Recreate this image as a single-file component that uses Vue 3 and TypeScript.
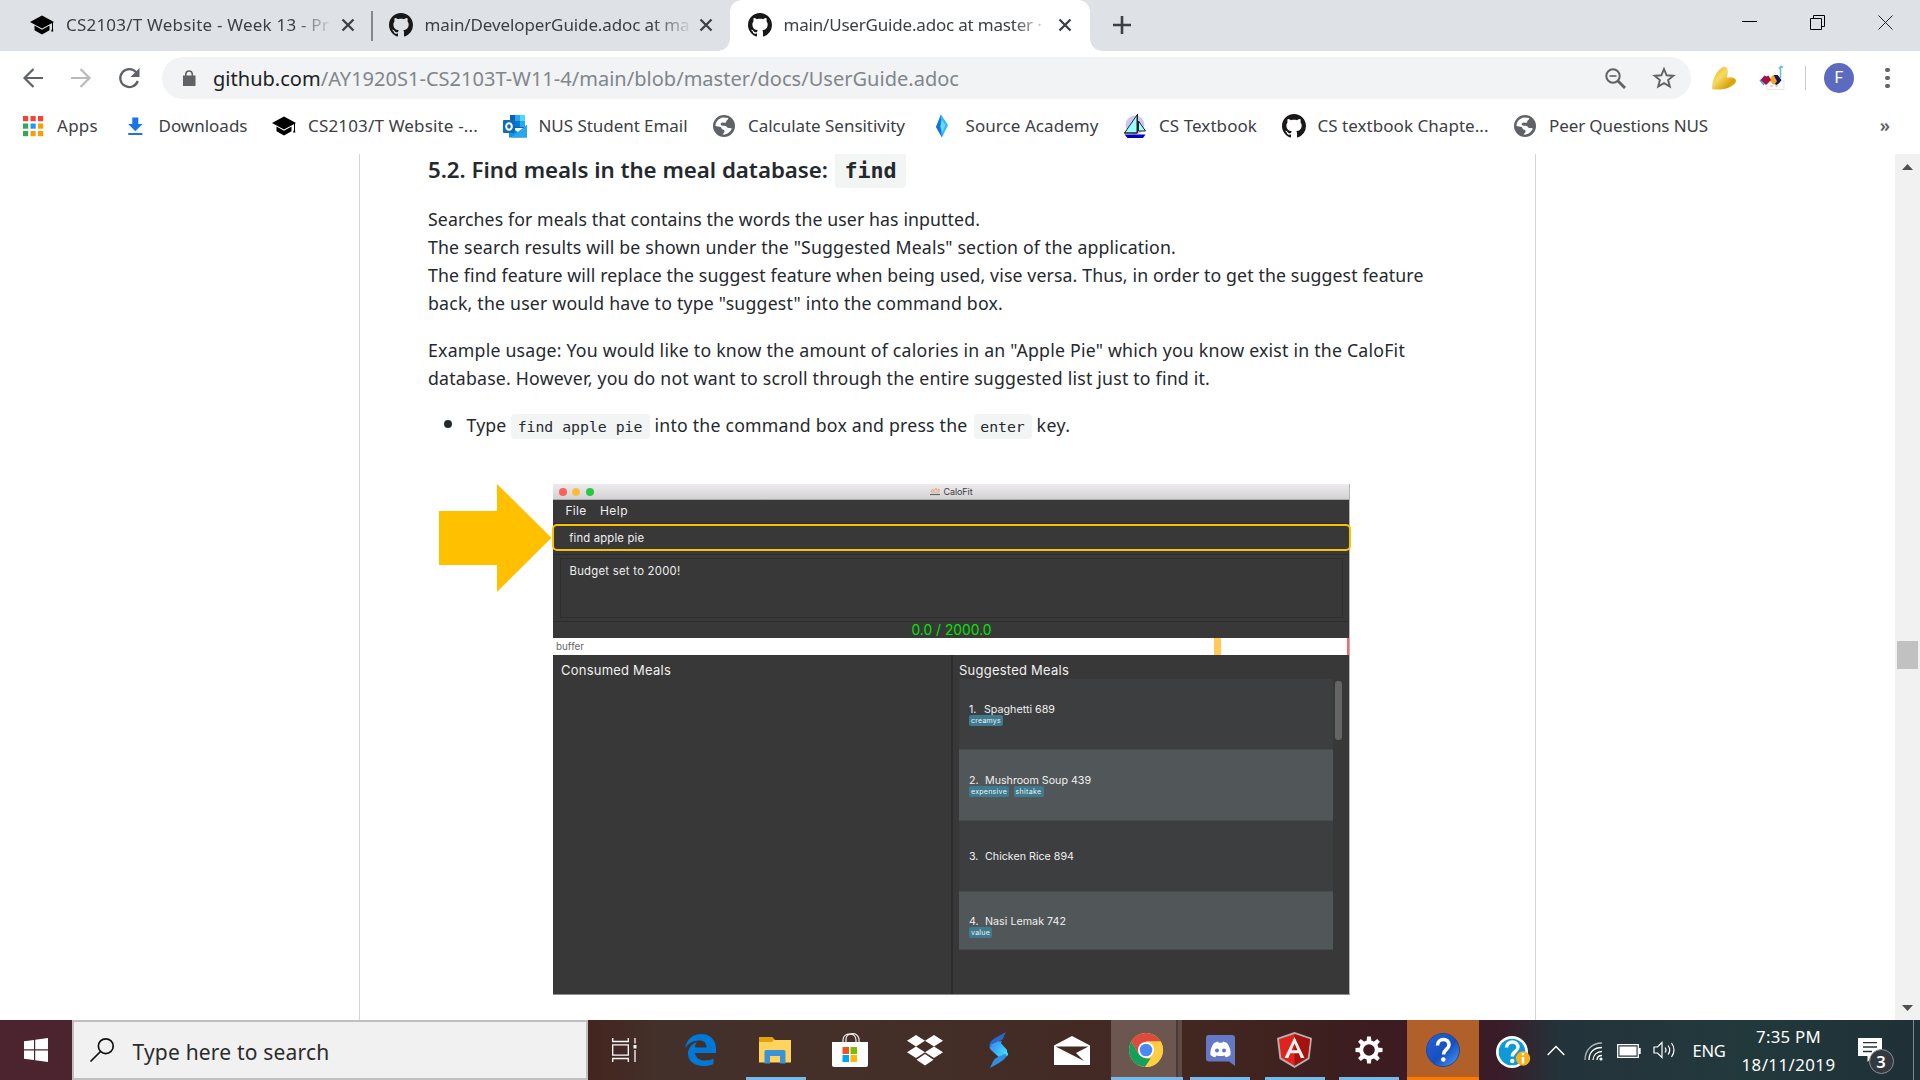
<script setup lang="ts">
import type { Directive } from 'vue'

interface Tab { title: string; width: number; icon: 'cap' | 'github'; active?: boolean }
interface Bookmark { icon: string; label: string; width: number }
interface Meal { index: number; name: string; width: number; height: number; tags: { label: string; width: number }[] }

// Spreads a run of text over the given width by adjusting its tracking.
const vFit: Directive<HTMLElement, number> = {
  mounted(el, { value }) {
    const count = (el.textContent ?? '').length
    const natural = el.getBoundingClientRect().width
    el.style.letterSpacing = `${((value - natural) / count).toFixed(4)}px`
  },
}

const tabs: Tab[] = [
  { title: 'CS2103/T Website - Week 13 - Pr', width: 263, icon: 'cap' },
  { title: 'main/DeveloperGuide.adoc at ma', width: 265, icon: 'github' },
  { title: 'main/UserGuide.adoc at master ·', width: 258, icon: 'github', active: true },
]

const bookmarks: Bookmark[] = [
  { icon: 'apps', label: 'Apps', width: 41 },
  { icon: 'download', label: 'Downloads', width: 89 },
  { icon: 'cap', label: 'CS2103/T Website -...', width: 170 },
  { icon: 'outlook', label: 'NUS Student Email', width: 149 },
  { icon: 'globe', label: 'Calculate Sensitivity', width: 157 },
  { icon: 'diamond', label: 'Source Academy', width: 133 },
  { icon: 'boat', label: 'CS Textbook', width: 98 },
  { icon: 'github', label: 'CS textbook Chapte...', width: 171 },
  { icon: 'globe', label: 'Peer Questions NUS', width: 159 },
]

const meals: Meal[] = [
  { index: 1, name: 'Spaghetti 689', width: 71, height: 71, tags: [{ label: 'creamys', width: 30 }] },
  { index: 2, name: 'Mushroom Soup 439', width: 106, height: 71, tags: [{ label: 'expensive', width: 36 }, { label: 'shitake', width: 26 }] },
  { index: 3, name: 'Chicken Rice 894', width: 89, height: 71, tags: [] },
  { index: 4, name: 'Nasi Lemak 742', width: 81, height: 58, tags: [{ label: 'value', width: 19 }] },
]

const githubPath = 'M8 0C3.58 0 0 3.58 0 8c0 3.54 2.29 6.53 5.47 7.59.4.07.55-.17.55-.38 0-.19-.01-.82-.01-1.49-2.01.37-2.53-.49-2.69-.94-.09-.23-.48-.94-.82-1.13-.28-.15-.68-.52-.01-.53.63-.01 1.08.58 1.23.82.72 1.21 1.87.87 2.33.66.07-.52.28-.87.51-1.07-1.78-.2-3.64-.89-3.64-3.95 0-.87.31-1.59.82-2.15-.08-.2-.36-1.02.08-2.12 0 0 .67-.21 2.2.82.64-.18 1.32-.27 2-.27s1.36.09 2 .27c1.53-1.04 2.2-.82 2.2-.82.44 1.1.16 1.92.08 2.12.51.56.82 1.27.82 2.15 0 3.07-1.87 3.75-3.65 3.95.29.25.54.73.54 1.48 0 1.07-.01 1.93-.01 2.2 0 .21.15.46.55.38A8.01 8.01 0 0 0 16 8c0-4.42-3.58-8-8-8z'
const gearTeeth = [0, 45, 90, 135, 180, 225, 270, 315]
const appColors = ['#f44336', '#f44336', '#f44336', '#34a853', '#2196f3', '#fb9e05', '#34a853', '#fb9e05', '#fb9e05']
</script>

<template>
  <div class="screen">
    <header class="tabstrip">
      <div v-for="(tab, i) in tabs" :key="i" class="tab" :class="{ active: tab.active, divided: i === 0 }">
        <svg v-if="tab.icon === 'cap'" class="fav" viewBox="0 0 24 24"><path d="M12 2.500 24 9 12 15.500 0 9zM4.500 12.500 12 16.800l7.500-4.300v4.800L12 21.500 4.500 17.300z" /><path d="M22 9.500v6.500l-1 2.500h2.300L23 16V9z" /></svg>
        <svg v-else class="fav" viewBox="0 0 16 16"><path fill="#191717" :d="githubPath" /></svg>
        <div class="tab-title"><span v-fit="tab.width">{{ tab.title }}</span></div>
        <svg class="tab-close" viewBox="0 0 14 14"><path d="M1.500 1.500l11 11M12.500 1.500l-11 11" stroke="#3c4043" stroke-width="2.300" /></svg>
      </div>
      <svg class="newtab" viewBox="0 0 18 18"><path d="M9 0v18M0 9h18" stroke="#3c4043" stroke-width="2.600" /></svg>
      <div class="win-controls">
        <svg viewBox="0 0 15 15"><path d="M0 6.500h15" stroke="#000" stroke-width="1" /></svg>
        <svg viewBox="0 0 15 15" fill="none" stroke="#000"><path d="M.5 3.500h11v11H.500zM3.500 3.500V.500h11v11h-3" /></svg>
        <svg viewBox="0 0 15 15"><path d="M.5.500l14 14M14.500.500l-14 14" stroke="#222" /></svg>
      </div>
    </header>

    <div class="toolbar">
      <svg class="nav back" viewBox="0 0 20 20" fill="none" stroke="#5f6368" stroke-width="2.200"><path d="M20 10H1.500M10.500 1 1.500 10l9 9" /></svg>
      <svg class="nav fwd" viewBox="0 0 20 20" fill="none" stroke="#bababa" stroke-width="2.200"><path d="M0 10h18.500M9.500 1l9 9-9 9" /></svg>
      <svg class="nav reload" viewBox="0 0 22 22"><path d="M18.300 5.400A9 9 0 1 0 19.800 14" fill="none" stroke="#5f6368" stroke-width="2.300" /><path d="M21.500 1v9h-9z" fill="#5f6368" /></svg>
      <div class="omnibox">
        <svg class="lock" viewBox="0 0 12 16"><path d="M0 5.500h12.500V16H0z" fill="#5f6368" /><path d="M2.800 6V3.800a3.300 3.300 0 0 1 6.500 0V6" fill="none" stroke="#5f6368" stroke-width="1.600" /></svg>
        <span v-fit="746" class="url"><b>github.com</b>/AY1920S1-CS2103T-W11-4/main/blob/master/docs/UserGuide.adoc</span>
        <svg class="mag" viewBox="0 0 21 21" fill="none" stroke="#5f6368" stroke-width="2"><circle cx="8" cy="8" r="6.700" /><path d="M13 13l7 7" stroke-width="2.800" /><path d="M4.500 8h7" stroke-width="1.600" /></svg>
        <svg class="star" viewBox="0 0 22 22"><path d="M11 2l2.600 6.300 6.700.5-5.200 4.300 1.700 6.500L11 16.100l-5.800 3.500 1.700-6.500L1.700 8.800l6.700-.5z" fill="none" stroke="#5f6368" stroke-width="1.900" /></svg>
      </div>
      <svg class="ext" viewBox="0 0 24 24">
        <defs><linearGradient id="gold" x1="0" y1="0" x2="1" y2="1"><stop offset="0" stop-color="#e8b921" /><stop offset=".4" stop-color="#f6da62" /><stop offset=".75" stop-color="#d9a308" /><stop offset="1" stop-color="#f3c62c" /></linearGradient></defs>
        <path d="M.3 23C-.5 14 6 2 12 .800c4-.6 5 5 2.500 11 5-1.500 9 0 9.500 3 .3 3-5 6.500-10 7.700-4 1-9 1.500-13.700.5z" fill="url(#gold)" />
      </svg>
      <svg class="ext second" viewBox="0 0 24 24">
        <path d="M7 15h17v8.500H7z" fill="#fafafa" stroke="#ddd" stroke-width=".6" /><path d="M0 14l4 5" stroke="#3fa9e0" stroke-width="1.500" /><path d="M20.500 1v11M19 2.500l2-2 2 1" fill="none" stroke="#69bce8" stroke-width="1.600" />
        <path d="M17.500 9l3.500 5-4 5-5-2z" fill="#1d1757" /><path d="M13 9l5 5-4 5-5-5z" fill="#f5a623" /><path d="M13.500 9h4l4 5-3 4z" fill="#1d1757" /><path d="M4.500 9.500l2 1 2-1 2.500 4.500-5 5-5.500-5z" fill="#a41244" /><path d="M10.500 20h2M15.500 20h2" stroke="#777" stroke-width=".7" />
      </svg>
      <i class="bar-divider"></i>
      <div class="avatar">F</div>
      <div class="dots"><i></i><i></i><i></i></div>
    </div>

    <nav class="bookmarks">
      <div v-for="(b, i) in bookmarks" :key="i" class="bookmark">
        <svg v-if="b.icon === 'apps'" viewBox="0 0 24 24"><rect v-for="(c, k) in appColors" :key="k" :x="2 + (k % 3) * 7.500" :y="2 + Math.floor(k / 3) * 7.500" width="5.200" height="5.200" :fill="c" /></svg>
        <svg v-else-if="b.icon === 'download'" viewBox="0 0 24 24" fill="#1a73e8"><path d="M9.300 3.500h6V10h4.200L12.300 17.200 5.200 10h4.100zM5.200 19h14.200v2H5.200z" /></svg>
        <svg v-else-if="b.icon === 'cap'" viewBox="0 0 24 24"><path d="M12 2.500 24 9 12 15.500 0 9zM4.500 12.500 12 16.800l7.500-4.300v4.800L12 21.500 4.500 17.300z" /><path d="M22 9.500v6.500l-1 2.500h2.300L23 16V9z" /></svg>
        <svg v-else-if="b.icon === 'outlook'" viewBox="0 0 24 24">
          <path d="M7 1h15v13H7z" fill="#0a62b5" /><path d="M12 1h5v6h-5zM17 7h5v6h-5z" fill="#28a8ea" /><path d="M17 1h5v6h-5z" fill="#50d9ff" /><path d="M12 7h5v6h-5z" fill="#0078d4" /><path d="M6 12l9 6 9-7v12.500H6z" fill="#1490df" /><path d="M24 23.500V11L8 23.500z" fill="#28a8ea" /><rect y="6" width="12" height="13" rx="1" fill="#0f6cbd" /><ellipse cx="6" cy="12.500" rx="2.800" ry="3.300" fill="none" stroke="#fff" stroke-width="2" />
        </svg>
        <svg v-else-if="b.icon === 'globe'" viewBox="0 0 24 24"><circle cx="12" cy="12" r="11" fill="#5f6368" /><path d="M11 3.500c-4 .5-7.500 4-7.500 8.500l5 1c1.500.5.5 2 2 2.500 1.500.3 2 .5 2 2.500l-2 2.500c4.500.5 8-2.500 9.300-6-2-1-4.300 0-5-1.500-.8-2-3-1-5-1.500-2-.8-1-3 1-3 1.500 0 2 .8 3 0s0-2 1.500-2.500c1-.5.700-1.500 1-2z" fill="#fff" /></svg>
        <svg v-else-if="b.icon === 'diamond'" viewBox="0 0 24 24"><path d="M11 .500 18 11l-6 12.500L6 13z" fill="#35b7fb" /><path d="M11 .5l-5 12.500 6 10.500-1.500-10z" fill="#1971d2" /><path d="M12 6l3.500 5-3 7-2-5.500z" fill="#60dcff" /></svg>
        <svg v-else-if="b.icon === 'boat'" viewBox="0 0 24 24"><circle cx="12" cy="11" r="9.500" fill="#cbc5fa" /><path d="M14 1 1.500 19H14zM15.500 7v10h7z" fill="#9ff" stroke="#222" stroke-width="1" /><path d="M1 19h13.500V0" fill="none" stroke="#222" /><path d="M1.500 20.500h21L20 24H4.500z" fill="#0000c8" /></svg>
        <svg v-else viewBox="0 0 16 16"><path fill="#191717" :d="githubPath" /></svg>
        <span v-fit="b.width">{{ b.label }}</span>
      </div>
      <span class="more">»</span>
    </nav>

    <main class="viewport">
      <article class="page">
        <h3><span v-fit="400">5.2. Find meals in the meal database:</span><code>find</code></h3>
        <p>
          <span class="line"><span v-fit="552">Searches for meals that contains the words the user has inputted.</span></span>
          <span class="line"><span v-fit="748">The search results will be shown under the "Suggested Meals" section of the application.</span></span>
          <span class="line"><span v-fit="995.5">The find feature will replace the suggest feature when being used, vise versa. Thus, in order to get the suggest feature</span></span>
          <span class="line"><span v-fit="575">back, the user would have to type "suggest" into the command box.</span></span>
        </p>
        <p>
          <span class="line"><span v-fit="977">Example usage: You would like to know the amount of calories in an "Apple Pie" which you know exist in the CaloFit</span></span>
          <span class="line"><span v-fit="782">database. However, you do not want to scroll through the entire suggested list just to find it.</span></span>
        </p>
        <div class="step">
          <i class="bullet"></i><span v-fit="40">Type</span><code class="long">find apple pie</code><span v-fit="313">into the command box and press the</span><code class="short">enter</code><span v-fit="34">key.</span>
        </div>

        <figure>
          <svg class="arrow" viewBox="0 0 114 108"><path d="M0 27h58V0l54.500 53.800L58 108V81H0z" fill="#ffc000" /></svg>
          <section class="app">
            <div class="app-title">
              <i class="red"></i><i class="amber"></i><i class="green"></i>
              <div class="app-name"><svg viewBox="0 0 10 9"><path d="M1 5l1.500-3 1.500 2L6 1l1 2.500L9 2v3z" fill="none" stroke="#f0a070" stroke-width=".9" /><path d="M0 7.500h10" stroke="#666" stroke-width="1.200" /></svg><span v-fit="29">CaloFit</span></div>
            </div>
            <div class="menu"><span v-fit="21">File</span><span v-fit="28">Help</span></div>
            <div class="command"><span v-fit="75">find apple pie</span></div>
            <div class="result"><div class="result-box"><span v-fit="111">Budget set to 2000!</span></div></div>
            <div class="budget"><span v-fit="80">0.0 / 2000.0</span></div>
            <div class="buffer"><span v-fit="28">buffer</span><i class="mark"></i><i class="end"></i></div>
            <div class="panels">
              <div class="consumed"><span v-fit="110">Consumed Meals</span></div>
              <div class="suggested">
                <span v-fit="110" class="head">Suggested Meals</span>
                <div class="list-wrap">
                  <div class="list">
                    <div v-for="m in meals" :key="m.index" class="meal" :style="{ height: m.height + 'px' }" :class="{ short: m.height < 60 }">
                      <div class="meal-name"><span class="num">{{ m.index }}.</span><span v-fit="m.width">{{ m.name }}</span></div>
                      <div v-if="m.tags.length" class="tags"><span v-for="t in m.tags" :key="t.label" class="tag"><span v-fit="t.width">{{ t.label }}</span></span></div>
                    </div>
                  </div>
                  <i class="thumb"></i>
                </div>
              </div>
            </div>
          </section>
        </figure>
      </article>
      <aside class="scrollbar">
        <svg viewBox="0 0 11 6"><path d="M0 6 5.500 0 11 6z" fill="#505050" /></svg>
        <i></i>
        <svg viewBox="0 0 11 6"><path d="M0 0l5.500 6L11 0z" fill="#505050" /></svg>
      </aside>
    </main>

    <footer class="taskbar">
      <div class="start"><svg viewBox="0 0 24 24" fill="#fff"><path d="M0 3.300 10 2v9.300H0zM11.200 1.800 24 0v11.300H11.200zM0 12.500h10V22L0 20.700zM11.200 12.500H24V24l-12.800-1.800z" /></svg></div>
      <div class="search">
        <svg viewBox="0 0 24 24" fill="none" stroke="#111" stroke-width="1.700"><circle cx="15.800" cy="8.200" r="7.400" /><path d="M10.500 13.500.500 23.500" /></svg>
        <span v-fit="197">Type here to search</span>
      </div>
      <div class="slots">
        <div class="slot taskview"><svg width="25" height="24" viewBox="0 0 25 24" fill="none" stroke="#fff" stroke-width="1.300"><path d="M.7 0v3.500h15.600V0M.700 24v-3.500h15.600V24M.700 6.800h15.600v10.400H.700zM23 0v5.500M23 12v12" /><path d="M23 7v3.500" stroke-width="3" /></svg></div>
        <div class="slot"><svg width="32" height="32" viewBox="0 0 32 32"><path fill="#0078d7" d="M1 14C3 5 9 0 17 0c9 0 15 6 15 14v5H11c.5 5 5 7.500 10 7.500 4 0 6.500-1 8.500-2v5.500c-3 1.500-6 2-10 2C10 32 4 27 4 19.500 4 14 8 10 13 8c-1.500 2-2 3.500-2 5.500h11.500C22.500 9 20 6.500 15 6.500 9 6.500 4 9.500 1 14z" /></svg></div>
        <div class="slot open explorer"><svg width="32" height="27" viewBox="0 0 32 27"><path d="M0 0h13l3 3h16v22.500H0z" fill="#ffd35c" /><path d="M0 0h13l2 2.500-2 2.500H0z" fill="#e0a30e" /><path d="M5.500 26.500V14.500q0-1.500 1.500-1.500h18q1.500 0 1.500 1.500v12H21V19H11v7.500z" fill="#3a93d8" /></svg></div>
        <div class="slot wide"><svg width="36" height="34" viewBox="0 0 36 34"><path d="M11 10V7c0-8 13-8 13 0v3M14 10V6c0-6 11-8 13 0v4" fill="none" stroke="#e4e4e4" stroke-width="1.300" /><path d="M0 9h36v23q0 2-2 2H2q-2 0-2-2z" fill="#fff" /><path d="M10.500 14H17v7h-6.500z" fill="#f25022" /><path d="M18.500 14H25v7h-6.500z" fill="#7fba00" /><path d="M10.500 22H17v7h-6.500z" fill="#00a4ef" /><path d="M18.500 22H25v7h-6.500z" fill="#ffb900" /></svg></div>
        <div class="slot wide"><svg width="36" height="31" viewBox="0 0 36 31" fill="#fff"><path d="M9 0l9 5.700-9 5.800-9-5.800zM27 0l9 5.700-9 5.800-9-5.800zM9 11.500l9 5.800L9 23l-9-5.700zM27 11.500l9 5.800-9 5.700-9-5.700zM18 19l8.500 5.800L18 30.500l-8.500-5.700z" /></svg></div>
        <div class="slot wide"><svg width="20" height="36" viewBox="0 0 20 36"><defs><linearGradient id="sw" x1="0" y1="0" x2="1" y2="1"><stop offset="0" stop-color="#3f7ff0" /><stop offset="1" stop-color="#3be8ff" /></linearGradient></defs><path d="M13 9 1 13c-1 2 0 4 1 5l10 9 6-3c2-1 1-3 0-4l-7-7z" fill="url(#sw)" /><path d="M17 0 6 6C1 9 0 12 1 15l10-6 2-1c2-2 2-5 4-8z" fill="#2b67c9" /><path d="M1 36l9-5c5-3 8-6 8-10L7 26c-3 2-4 6-6 10z" fill="#2f8fe0" /><path d="M1 13l9-4 8 9v5z" fill="url(#sw)" /></svg></div>
        <div class="slot"><svg width="36" height="29" viewBox="0 0 36 29"><path d="M0 9.500 18 0l18 9.500V29H0z" fill="#fff" /><path d="M1.500 10.500h33L22 17l8 8z" fill="#432c26" /></svg></div>
        <div class="slot open current"><svg width="34" height="34" viewBox="0 0 34 34"><circle cx="17" cy="17" r="17" fill="#ffcd40" /><path d="M2.300 8.500A17 17 0 0 1 31.700 8.500H17L9.600 21.200z" fill="#dd4b3e" /><path d="M2.300 8.500 9.600 21.200 17 25.500h5.500L16 34A17 17 0 0 1 2.300 8.500z" fill="#12a05c" /><path d="M31.700 8.500H17l7.400 12.700L16 34A17 17 0 0 0 31.700 8.500z" fill="#ffcd40" /><circle cx="17" cy="17" r="8" fill="#fff" /><circle cx="17" cy="17" r="6.300" fill="#4a89f4" /></svg></div>
        <div class="slot open"><svg width="29" height="31" viewBox="0 0 29 31"><path d="M3 0h23q3 0 3 3v28l-6-4.500H3q-3 0-3-3V3q0-3 3-3z" fill="#6478c6" /><path d="M8 8l4-1.500.7 1.200h3.600L17 6.500 21 8c3 4 4 8 3.500 12-1.500 1.300-3 2-4.800 2.300l-1-1.800c-3 .8-5.400.8-8.400 0l-1 1.800C7.500 22 6 21.300 4.500 20 4 16 5 12 8 8z" fill="#fff" /><circle cx="11" cy="15.500" r="2" fill="#6478c6" /><circle cx="18" cy="15.500" r="2" fill="#6478c6" /></svg></div>
        <div class="slot open"><svg width="35" height="36" viewBox="0 0 35 36"><path d="M17.500 0 35 6l-2.500 21-15 9-15-9L0 6z" fill="#b3b3b3" /><path d="M17.500 2 33 7.200l-2.300 18.600-13.200 8-13.200-8L2 7.200z" fill="#e0231f" /><path d="M17.500 2 33 7.200l-2.300 18.600-13.200 8z" fill="#a6120d" /><path d="M17.500 5 7.500 26h3.800l2-4.800h8.500l2 4.800h3.700zm0 6.500 3 6.700h-6z" fill="#f2f2f2" fill-rule="evenodd" /></svg></div>
        <div class="slot open"><svg width="28" height="28" viewBox="-14 -14 28 28"><circle r="7.800" fill="none" stroke="#fff" stroke-width="4" /><path v-for="a in gearTeeth" :key="a" d="M-2.500-8-1.900-13.500h3.800L2.500-8z" fill="#fff" :transform="`rotate(${a})`" /></svg></div>
        <div class="slot alert"><svg width="34" height="34" viewBox="0 0 34 34"><defs><linearGradient id="q" x1="0" y1="0" x2="1" y2="1"><stop offset="0" stop-color="#2563d9" /><stop offset=".55" stop-color="#174fbd" /><stop offset="1" stop-color="#4ba2ff" /></linearGradient></defs><circle cx="17" cy="17" r="16.500" fill="url(#q)" stroke="#244a8e" /><path d="M11.500 12.500c0-8 12-8 11.500-.5-.2 4.500-5.500 4.500-5.500 9.500" fill="none" stroke="#fff" stroke-width="3.600" /><circle cx="17.300" cy="26.500" r="2.300" fill="#fff" /></svg></div>
      </div>
      <div class="tray">
        <svg class="t-help" width="34" height="32" viewBox="0 0 34 32"><circle cx="16" cy="16" r="16" fill="#fff" /><circle cx="16" cy="16" r="13.300" fill="#0e9ad9" /><path d="M10.500 11.500c0-7.500 12-7 11.500 0-.3 4-5.700 4-5.700 9" fill="none" stroke="#fff" stroke-width="3.400" /><circle cx="16.300" cy="25" r="2.200" fill="#fff" /><circle cx="27" cy="22.500" r="7.200" fill="#f6b11f" /><path d="M27 21v6.500M27 17v2.300" stroke="#fff" stroke-width="2.400" /></svg>
        <svg class="t-chev" width="18" height="11" viewBox="0 0 18 11"><path d="M.7 10 9 1.500 17.300 10" fill="none" stroke="#fff" stroke-width="1.500" /></svg>
        <svg class="t-wifi" width="19" height="19" viewBox="0 0 19 19" fill="none" stroke="#fff" stroke-width="1.300"><path d="M1 18C1 8 8 1 18 1" opacity=".65" /><path d="M5 18C5 10 10 5.500 18 5.500M9 18c0-5 4-8.500 9-8.500M13 18c0-3 2-4.500 5-4.500" /><circle cx="17" cy="17" r="1.600" fill="#fff" stroke="none" /></svg>
        <svg class="t-bat" width="24" height="14" viewBox="0 0 24 14"><path d="M.7.700h20.600v12.600H.700z" fill="none" stroke="#fff" stroke-width="1.300" /><path d="M2.500 2.500h17v9h-17zM22 4h1.700v6H22z" fill="#fff" /></svg>
        <svg class="t-vol" width="24" height="18" viewBox="0 0 24 18" fill="none" stroke="#fff" stroke-width="1.200"><path d="M1 6h3.500L9 1.500v15L4.500 12H1z" /><path d="M12 6.500q2 2.500 0 5M15 4.500q3.500 4.500 0 9M18.500 2q5 7 0 14" /></svg>
        <span v-fit="33" class="t-lang">ENG</span>
        <div class="clock"><span v-fit="65">7:35 PM</span><span v-fit="94">18/11/2019</span></div>
        <div class="notif">
          <svg width="24" height="25" viewBox="0 0 24 25"><path d="M0 0h24v18h-9l-5.500 6v-6H0z" fill="#fff" /><path d="M5 4.700h14M5 9h14M5 13.500h9" stroke="#22343a" stroke-width="1.300" /></svg>
          <b>3</b>
        </div>
        <i class="peek"></i>
      </div>
    </footer>
  </div>
</template>

<style>
html, body { margin: 0; overflow: hidden; background: #fff; }
</style>

<style scoped>
.screen { width: 1920px; height: 1080px; display: flex; flex-direction: column; overflow: hidden; background: #fff; font-family: "Noto Sans", "Open Sans", sans-serif; color: #3c4043; white-space: nowrap; }
.screen * { box-sizing: border-box; }
svg { display: block; flex: none; overflow: visible; }
i { display: block; flex: none; }

.tabstrip { height: 51px; flex: none; display: flex; align-items: center; background: #dee1e6; }
.tab { height: 51px; width: 359px; display: flex; align-items: center; padding-left: 18px; position: relative; padding-bottom: 1px; }
.tab:first-child { width: 370.500px; padding-left: 30px; }
.tab.active { background: #fff; border-radius: 12px 12px 0 0; width: 360px; }
.tab.active::before, .tab.active::after { content: ""; position: absolute; bottom: 0; width: 12px; height: 12px; }
.tab.active::before { left: -12px; background: radial-gradient(circle at 0 0, transparent 11.5px, #fff 12px); }
.tab.active::after { right: -12px; background: radial-gradient(circle at 100% 0, transparent 11.5px, #fff 12px); }
.tab.divided::after { content: ""; position: absolute; right: -2px; top: 11px; width: 1.5px; height: 30px; background: #85888c; }
.fav { width: 24px; height: 24px; }
.tab-title { margin-left: 12px; width: 264px; overflow: hidden; font-size: 17px; line-height: 28px; mask-image: linear-gradient(90deg, #000 228px, transparent 268px); }
.tab-title span, .bookmark span, .line > span, .step > span, h3 > span, .url { display: inline-block; }
.tab-close { width: 14px; height: 14px; margin-left: 10.500px; }
.newtab { width: 18px; height: 18px; margin: 0 0 1px 23.500px; }
.win-controls { display: flex; gap: 53px; margin-left: auto; margin-right: 27px; padding-bottom: 7px; }
.win-controls svg { width: 15px; height: 15px; }

.toolbar { height: 54px; flex: none; display: flex; align-items: center; }
.nav { height: 20px; width: 20px; margin-left: 23px; }
.fwd { margin-left: 28px; }
.reload { margin-left: 27px; width: 22px; height: 22px; }
.omnibox { margin-left: 22px; width: 1529px; height: 42px; border-radius: 21px; background: #f1f3f4; display: flex; align-items: center; }
.lock { width: 12px; height: 16px; margin-left: 21px; }
.url { margin-left: 18px; font-size: 20px; line-height: 43px; color: #80868b; }
.url b { font-weight: 400; color: #202124; }
.mag { width: 21px; height: 21px; margin-left: auto; }
.star { width: 22px; height: 22px; margin: 0 16px 0 27px; }
.ext { width: 24px; height: 24px; margin-left: 21px; }
.ext.second { margin-left: 24px; }
.bar-divider { width: 1px; height: 24px; background: #c9cbce; margin-left: 21px; }
.avatar { width: 30px; height: 30px; border-radius: 50%; background: #5c6bc0; color: #fff; font: 16px/30px Roboto, sans-serif; text-align: center; margin-left: 18px; }
.dots { display: flex; flex-direction: column; gap: 3.500px; margin-left: 31px; }
.dots i { width: 4.500px; height: 4.500px; border-radius: 50%; background: #5f6368; }

.bookmarks { height: 49px; flex: none; display: flex; align-items: center; gap: 24.500px; padding: 0 0 7px 21px; }
.bookmark { display: flex; align-items: center; gap: 12px; font-size: 17px; line-height: 30px; }
.bookmark svg { width: 24px; height: 24px; }
.more { margin-left: auto; margin-right: 30px; font-size: 18px; font-weight: 600; line-height: 20px; color: #5f6368; padding-bottom: 3px; }

.viewport { height: 866px; flex: none; display: flex; overflow: hidden; }
.page { width: 1177px; margin-left: 359px; border: solid #d1d5da; border-width: 0 1px; padding-left: 68px; color: #24292e; }
h3 { margin: 0; height: 34px; display: flex; font-size: 22.300px; font-weight: 600; line-height: 31px; }
h3 code { margin-left: 7px; width: 71px; height: 34px; border-radius: 0 0 4px 4px; background: #f3f4f4; font: bold 21.700px/33px "DejaVu Sans Mono", monospace; text-align: center; }
p { margin: 17px 0 19px; font-size: 17.700px; }
p + p { margin-top: 0; }
.line { display: block; height: 28px; line-height: 28px; }
.step { display: flex; align-items: center; font-size: 17.700px; line-height: 28px; height: 28px; }
.bullet { width: 8px; height: 8px; border-radius: 50%; background: #24292e; margin: 0 15px 2px 15.500px; }
.step code { height: 25px; border-radius: 4px; background: #f3f4f4; font: 14.800px/26px "DejaVu Sans Mono", monospace; text-align: center; margin: 2px 5px 0 4px; }
.step code.long { width: 139px; }
.step code.short { width: 58px; margin-left: 6px; }

figure { margin: 44px 0 0 11px; display: flex; }
.arrow { width: 114px; height: 108px; margin-top: 1px; }
.app { width: 797px; height: 511px; margin-top: 1px; background: #383838; border-right: 1px solid #b5b5b5; border-bottom: 1px solid #8e8e8e; font-family: Inter, sans-serif; color: #f0f0f0; display: flex; flex-direction: column; }
.app span { display: inline-block; }
.app-title { height: 16px; flex: none; display: flex; align-items: center; gap: 5.500px; padding-left: 5.500px; background: linear-gradient(#edebed, #d3d1d3); border-bottom: 1px solid #aaa; color: #3b3b3b; font-size: 9px; }
.app-title > i { width: 8px; height: 8px; border-radius: 50%; }
.red { background: #fc605b; }
.amber { background: #fdbc40; }
.green { background: #28c940; }
.app-name { display: flex; align-items: center; gap: 3.500px; margin-left: 331px; line-height: 15px; }
.app-name svg { width: 10px; height: 9px; }
.menu { height: 24px; flex: none; display: flex; gap: 13.500px; padding: 1px 0 0 12.500px; font-size: 12px; line-height: 20px; border-bottom: 1px solid #2b2b2b; }
.command { width: 799px; height: 27px; flex: none; margin-left: -1.500px; border: 2.400px solid #ffc000; border-radius: 5px; padding-left: 15.700px; font-size: 11.300px; line-height: 24.500px; z-index: 1; }
.result { height: 68px; flex: none; margin-top: 3px; border: solid #2d2d2d; border-width: 1px 0; padding: 3px 6px 0 7px; }
.result-box { height: 60px; border: 1px solid #2e2e2e; padding-left: 8.500px; font-size: 11.300px; line-height: 24px; }
.budget { height: 16px; flex: none; text-align: center; color: #00e400; font-size: 13.800px; line-height: 17.500px; padding-left: 1px; }
.buffer { height: 17px; flex: none; background: #fff; color: #666; font-size: 9.800px; line-height: 17px; display: flex; padding-left: 3px; }
.mark { width: 7px; height: 17px; background: #ffc95c; margin-left: 630px; }
.end { width: 2px; height: 17px; background: #ff6468; margin-left: auto; }
.panels { flex: 1; display: flex; font-size: 13px; line-height: 18px; }
.consumed { width: 400px; border-right: 2px solid #2c2c2c; padding: 6px 0 0 8px; }
.suggested { flex: 1; padding: 6px 0 0 6px; }
.head { height: 18px; vertical-align: top; }
.list-wrap { display: flex; gap: 2px; }
.list { width: 374px; }
.thumb { width: 7px; height: 59px; border-radius: 3px; background: #656565; margin-top: 2px; }
.meal { background: #3c3e3f; border-bottom: 1px solid #484b4c; display: flex; flex-direction: column; justify-content: center; padding: 0 0 1px 10px; font-size: 10.700px; line-height: 15px; }
.meal:nth-child(even) { background: #515658; }
.meal.short { padding-top: 12px; }
.meal-name { display: flex; height: 13px; }
.num { width: 16px; }
.meal:first-child .num { width: 15px; }
.tags { display: flex; gap: 4.500px; }
.tag { height: 11px; border-radius: 2px; background: #3e7b91; padding: 0 2px; font-size: 7px; line-height: 11px; }
.tag span { display: block; width: max-content; }

.scrollbar { width: 25px; margin-left: auto; background: #f1f1f1; display: flex; flex-direction: column; align-items: center; padding: 10px 0 9px; }
.scrollbar svg { width: 11px; height: 6px; }
.scrollbar i { width: 21px; height: 28px; background: #c1c1c1; margin: 471px 0 auto; }

.taskbar { height: 60px; flex: none; display: flex; background: linear-gradient(90deg, #4b2430 0, #4b2430 72px, #44251f 590px, #44302a 660px, #443029 850px, #432a25 1080px, #42261f 1220px, #3c1c20 1370px, #3a1c28 1500px, #24333b 1560px, #22393c 1750px, #1f3036 1920px); color: #fff; }
.start { width: 72px; display: flex; align-items: center; justify-content: center; }
.start svg { width: 24px; height: 24px; }
.search { width: 516px; border: 2px solid #c0c0c0; background: #f1f1f1; display: flex; align-items: center; padding-left: 16px; gap: 18.500px; color: #2b2b2b; font-size: 21px; line-height: 30px; }
.search svg { width: 24px; height: 24px; }
.search span, .tray span { display: inline-block; }
.search span { margin-top: 3px; }
.slots { display: flex; width: 893px; }
.slot { width: 74.400px; height: 60px; display: flex; align-items: center; justify-content: center; position: relative; }
.slot.taskview { padding-right: 2px; }
.slot.explorer { padding-left: 3px; }
.slot.wide { padding-left: 4px; }
.slot.open::after { content: ""; position: absolute; bottom: 0; left: 7px; width: 60px; height: 3px; background: #76b9ed; }
.slot.explorer::after { left: 9px; }
.slot.current { background: linear-gradient(90deg, transparent 2px, #6b5650 2px, #6b5650 67px, #4c3935 67px, #4c3935 69px, #5f4c47 69px, #5f4c47 73.500px, transparent 73.500px); }
.slot.current::after { left: 2px; width: 72px; }
.slot.alert { background: linear-gradient(90deg, transparent 1px, #b06028 1px, #b06028 73px, transparent 73px); }
.slot.alert::after { content: ""; position: absolute; bottom: 0; left: 1px; width: 72px; height: 3px; background: #ff7600; }
.tray { flex: 1; display: flex; align-items: center; padding-left: 15px; }
.t-help { margin-top: 4px; }
.t-chev { margin-left: 17px; }
.t-wifi { margin: 2px 0 0 18.500px; }
.t-bat { margin: 1px 0 0 14px; }
.t-vol { margin-left: 12px; }
.t-lang { margin-left: 16px; font-size: 16.600px; margin-top: 1px; }
.clock { width: 96px; margin-left: 15px; display: flex; flex-direction: column; align-items: center; font-size: 16.800px; line-height: 28px; padding-top: 1px; }
.notif { width: 36px; height: 60px; margin-left: 21px; padding-top: 18px; position: relative; }
.notif b { position: absolute; left: 11px; top: 29px; width: 25px; height: 25px; border-radius: 50%; background: #333a3f; border: 1px solid #8a8f92; font-size: 16.500px; line-height: 23px; text-align: center; font-weight: 600; }
.peek { width: 1px; height: 60px; background: #7d898c; margin-left: auto; margin-right: 6px; }
</style>
